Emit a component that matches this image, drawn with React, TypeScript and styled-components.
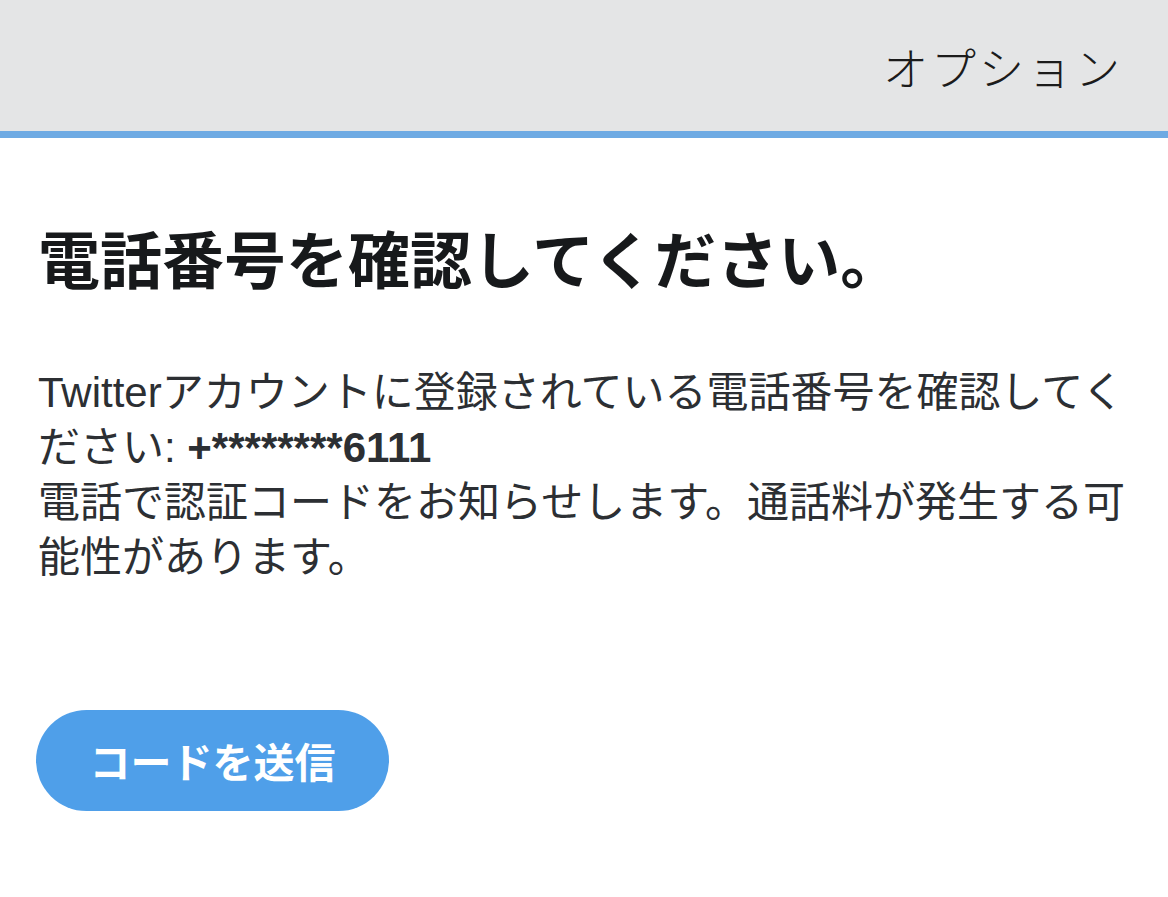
import React from "react";
import styled, { createGlobalStyle } from "styled-components";

const GlobalStyle = createGlobalStyle`
  html, body { margin: 0; padding: 0; background: #ffffff; }
  body {
    font-family: "Liberation Sans", "Noto Sans CJK JP", sans-serif;
    -webkit-font-smoothing: antialiased;
  }
`;

const Page = styled.div`
  width: 1168px;
  min-height: 897px;
  background: #ffffff;
  display: flex;
  flex-direction: column;
`;

const Header = styled.header`
  height: 131px;
  background: #e4e5e6;
  border-bottom: 7px solid #6eaae3;
  display: flex;
  align-items: center;
  justify-content: flex-end;
  padding: 0 48px 0 38px;
`;

const HeaderAction = styled.span`
  font-family: "Noto Sans CJK JP", sans-serif;
  font-weight: 300;
  font-size: 45px;
  color: #1b1b1b;
  letter-spacing: 3px;
  margin-right: -3px;
  margin-top: 2px;
`;

const Content = styled.main`
  display: flex;
  flex-direction: column;
  align-items: flex-start;
  padding: 82px 20px 0 38px;
`;

const Title = styled.h1`
  margin: 0;
  font-family: "Noto Sans CJK JP", sans-serif;
  font-weight: 700;
  font-size: 62px;
  line-height: 74px;
  color: #17191b;
  white-space: nowrap;
`;

const Body = styled.p`
  margin: 71px 0 0 0;
  font-size: 42px;
  line-height: 55px;
  color: #2c2f33;
  white-space: nowrap;
  font-family: "Liberation Sans", "Noto Sans CJK JP", sans-serif;
`;

const Strong = styled.b`
  font-weight: 700;
`;

const SendButton = styled.button`
  margin: 125px 0 0 -2px;
  height: 101px;
  width: 353px;
  border: none;
  border-radius: 51px;
  background: #4f9fe9;
  color: #ffffff;
  font-family: "Noto Sans CJK JP", sans-serif;
  font-weight: 700;
  font-size: 41px;
  display: flex;
  align-items: center;
  justify-content: center;
  padding: 0 0 2px 0;
`;

export default function App() {
  return (
    <>
      <GlobalStyle />
      <Page>
        <Header>
          <HeaderAction>オプション</HeaderAction>
        </Header>
        <Content>
          <Title>電話番号を確認してください。</Title>
          <Body>
            Twitterアカウントに登録されている電話番号を確認してく
            <br />
            ださい: <Strong>+********6111</Strong>
            <br />
            電話で認証コードをお知らせします。通話料が発生する可
            <br />
            能性があります。
          </Body>
          <SendButton>コードを送信</SendButton>
        </Content>
      </Page>
    </>
  );
}
